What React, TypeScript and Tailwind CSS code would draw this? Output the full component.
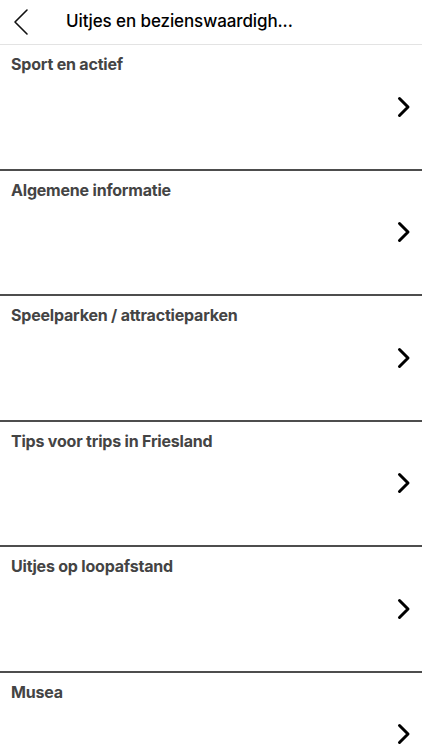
import React from "react";

const items = [
  "Sport en actief",
  "Algemene informatie",
  "Speelparken / attractieparken",
  "Tips voor trips in Friesland",
  "Uitjes op loopafstand",
  "Musea",
];

function Chevron() {
  return (
    <svg width="14" height="22" viewBox="0 0 14 22" fill="none">
      <path d="M2.5 2.5 L11 11 L2.5 19.5" stroke="#000" strokeWidth="3" strokeLinecap="round" strokeLinejoin="round" />
    </svg>
  );
}

export default function App() {
  return (
    <div className="w-[422px] h-[750px] overflow-hidden bg-white" style={{ fontFamily: "Inter, 'Noto Sans', sans-serif" }}>
      <div className="h-[45px] flex items-center border-b border-[#e3e3e3]">
        <div className="w-[66px] pl-[12px] flex items-center">
          <svg width="18" height="28" viewBox="0 0 18 28" fill="none">
            <path d="M15 2 L3 14 L15 26" stroke="#111" strokeWidth="1.6" strokeLinecap="round" strokeLinejoin="round" />
          </svg>
        </div>
        <div className="text-[17px] font-medium text-black tracking-[-0.1px]">Uitjes en bezienswaardigh...</div>
      </div>
      {items.map((t) => (
        <div key={t} className="h-[125.5px] border-b-2 border-[#4d4d4d] flex flex-col">
          <div className="pl-[11px] pt-[9px] text-[16px] leading-[21px] font-bold text-[#444444] tracking-[-0.2px]">{t}</div>
          <div className="flex-1 flex items-center justify-end pr-[11px] pb-[30px]">
            <Chevron />
          </div>
        </div>
      ))}
    </div>
  );
}
